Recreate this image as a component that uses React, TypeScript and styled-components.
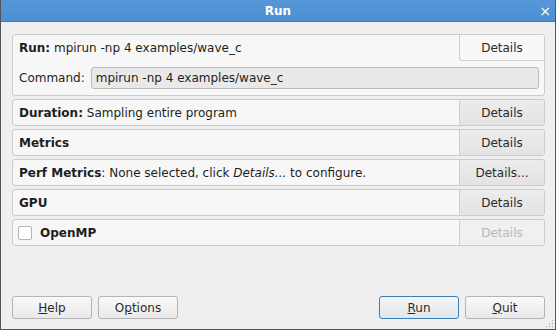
import React from "react";
import styled, { createGlobalStyle } from "styled-components";

const Global = createGlobalStyle`
  html, body {
    margin: 0;
    padding: 0;
    background: #efefef;
  }
  body {
    font-family: "DejaVu Sans", "Liberation Sans", sans-serif;
    font-size: 12px;
    color: #1e1e1e;
  }
`;

const Window = styled.div`
  position: relative;
  width: 556px;
  height: 330px;
  box-sizing: border-box;
  border: 1px solid #545454;
  border-top: none;
  display: flex;
  flex-direction: column;
  background: #efefef;
`;

const TitleBar = styled.div`
  height: 22px;
  background: linear-gradient(#5597d8, #4c8fd2);
  border-bottom: 1px solid #3f78b0;
  display: grid;
  grid-template-columns: 30px 1fr 30px;
  align-items: center;
  color: #fff;
  box-sizing: border-box;
`;

const Title = styled.div`
  text-align: center;
  font-weight: bold;
  font-size: 12px;
`;

const Close = styled.div`
  text-align: right;
  padding-right: 4px;
  font-size: 14px;
  line-height: 1;
`;

const Body = styled.div`
  flex: 1;
  display: flex;
  flex-direction: column;
  padding: 12px 10px 10px 11px;
`;

const Sections = styled.div`
  display: flex;
  flex-direction: column;
  gap: 3px;
`;

const Panel = styled.div`
  border: 1px solid #cbcbcb;
  border-radius: 3px;
  background: #f7f7f7;
  display: flex;
  flex-direction: column;
  overflow: hidden;
`;

const Row = styled.div<{ $tall?: boolean }>`
  height: ${(p) => (p.$tall ? "26px" : "25px")};
  display: flex;
  align-items: stretch;
`;

const Label = styled.div`
  flex: 1;
  display: flex;
  align-items: center;
  gap: 8px;
  padding-left: 6px;
  white-space: nowrap;
  b {
    font-weight: bold;
  }
`;

const DetailsButton = styled.div<{ $tab?: boolean; $disabled?: boolean }>`
  width: 84px;
  display: flex;
  align-items: center;
  justify-content: center;
  border-left: 1px solid #cfcfcf;
  background: ${(p) =>
    p.$tab
      ? "#f8f8f8"
      : p.$disabled
      ? "#f0f0f0"
      : "linear-gradient(#ececec, #e3e3e3)"};
  border-bottom: ${(p) => (p.$tab ? "1px solid #cfcfcf" : "none")};
  border-bottom-left-radius: ${(p) => (p.$tab ? "3px" : "0")};
  color: ${(p) => (p.$disabled ? "#b8b8b8" : "#2a2a2a")};
`;

const CommandRow = styled.div`
  display: flex;
  align-items: center;
  gap: 6px;
  padding: 6px 5px 6px 6px;
`;

const Input = styled.div`
  flex: 1;
  height: 22px;
  box-sizing: border-box;
  border: 1px solid #b9b9b9;
  border-radius: 3px;
  background: #e9e9e9;
  display: flex;
  align-items: center;
  padding-left: 4px;
`;

const Check = styled.span`
  width: 14px;
  height: 14px;
  box-sizing: border-box;
  border: 1px solid #b5b5b5;
  border-radius: 2px;
  background: #fff;
  margin-left: -1px;
`;

const Footer = styled.div`
  margin-top: auto;
  display: flex;
  align-items: center;
  gap: 6px;
`;

const Spacer = styled.div`
  flex: 1;
`;

const Button = styled.div<{ $default?: boolean }>`
  width: 80px;
  height: 23px;
  box-sizing: border-box;
  border: 1px solid ${(p) => (p.$default ? "#3b7fb5" : "#b4b4b4")};
  border-radius: 3px;
  background: ${(p) =>
    p.$default
      ? "linear-gradient(#f4f6f8, #e2e7ec)"
      : "linear-gradient(#f9f9f9, #e9e9e9)"};
  display: flex;
  align-items: center;
  justify-content: center;
  color: #2a2a2a;
  u {
    text-decoration: underline;
  }
`;

const Grip = styled.svg`
  position: absolute;
  right: 1px;
  bottom: 1px;
`;

const Details = ({ tab, disabled, text = "Details" }: { tab?: boolean; disabled?: boolean; text?: string }) => (
  <DetailsButton $tab={tab} $disabled={disabled}>
    {text}
  </DetailsButton>
);

export default function App() {
  return (
    <>
      <Global />
      <Window>
        <TitleBar>
          <div />
          <Title>Run</Title>
          <Close>×</Close>
        </TitleBar>
        <Body>
          <Sections>
            <Panel>
              <Row $tall>
                <Label>
                  <span>
                    <b>Run:</b> mpirun -np 4 examples/wave_c
                  </span>
                </Label>
                <Details tab />
              </Row>
              <CommandRow>
                <span>Command:</span>
                <Input>mpirun -np 4 examples/wave_c</Input>
              </CommandRow>
            </Panel>
            <Panel>
              <Row>
                <Label>
                  <span>
                    <b>Duration:</b> Sampling entire program
                  </span>
                </Label>
                <Details />
              </Row>
            </Panel>
            <Panel>
              <Row>
                <Label>
                  <b>Metrics</b>
                </Label>
                <Details />
              </Row>
            </Panel>
            <Panel>
              <Row>
                <Label>
                  <span>
                    <b>Perf Metrics</b>: None selected, click <i>Details...</i> to configure.
                  </span>
                </Label>
                <Details text="Details..." />
              </Row>
            </Panel>
            <Panel>
              <Row>
                <Label>
                  <b>GPU</b>
                </Label>
                <Details />
              </Row>
            </Panel>
            <Panel>
              <Row>
                <Label>
                  <Check />
                  <b>OpenMP</b>
                </Label>
                <Details disabled />
              </Row>
            </Panel>
          </Sections>
          <Footer>
            <Button>
              <span>
                <u>H</u>elp
              </span>
            </Button>
            <Button>
              <span>
                O<u>p</u>tions
              </span>
            </Button>
            <Spacer />
            <Button $default>
              <span>
                <u>R</u>un
              </span>
            </Button>
            <Button>
              <span>
                <u>Q</u>uit
              </span>
            </Button>
          </Footer>
        </Body>
        <Grip width="8" height="8" viewBox="0 0 8 8">
          {[
            [6, 0],
            [6, 3],
            [3, 3],
            [6, 6],
            [3, 6],
            [0, 6],
          ].map(([x, y], i) => (
            <rect key={i} x={x} y={y} width="1.2" height="1.2" fill="#b0b0b0" />
          ))}
        </Grip>
      </Window>
    </>
  );
}
